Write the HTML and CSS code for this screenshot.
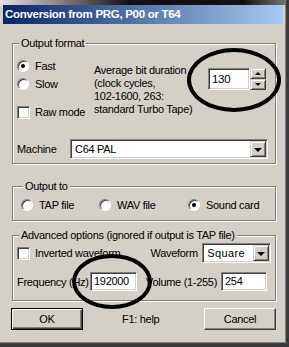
FILE: index.html
```html
<!DOCTYPE html>
<html lang="en">
<head>
    <meta charset="UTF-8">
    <meta name="viewport" content="width=device-width, initial-scale=1.0">
    <title>Conversion from PRG, P00 or T64</title>
    <link rel="stylesheet" href="styles.css">
</head>
<body>
    <div class="window">
        <div class="edge"></div>
        <div class="titlebar">Conversion from PRG, P00 or T64</div>

        <div class="content">
            <!-- output format -->
            <fieldset class="group fmt">
                <legend>Output format</legend>
                <div class="fmt-row">
                    <div class="choices">
                        <div class="opt"><span class="radio on"></span>Fast</div>
                        <div class="opt"><span class="radio"></span>Slow</div>
                        <div class="opt raw"><span class="check"></span>Raw mode</div>
                    </div>
                    <div class="hint">Average bit duration<br>(clock cycles,<br>102-1600, 263:<br>standard Turbo Tape)</div>
                    <div class="spin">
                        <div class="field sunken">130</div>
                        <div class="arrows">
                            <span class="raised"><i class="tri up"></i></span>
                            <span class="raised"><i class="tri down"></i></span>
                        </div>
                    </div>
                </div>
                <div class="machine-row">
                    <span class="machine-lbl">Machine</span>
                    <div class="combo sunken machine">
                        <span class="val">C64 PAL</span>
                        <span class="drop raised"><i class="tri dn"></i></span>
                    </div>
                </div>
            </fieldset>

            <!-- output to -->
            <fieldset class="group out">
                <legend>Output to</legend>
                <div class="out-row">
                    <div class="opt tap"><span class="radio"></span>TAP file</div>
                    <div class="opt wav"><span class="radio"></span>WAV file</div>
                    <div class="opt"><span class="radio on"></span>Sound card</div>
                </div>
            </fieldset>

            <!-- advanced -->
            <fieldset class="group adv">
                <legend>Advanced options (ignored if output is TAP file)</legend>
                <div class="adv-row">
                    <div class="opt inv"><span class="check"></span>Inverted waveform</div>
                    <span class="wave-lbl">Waveform</span>
                    <div class="combo sunken wave">
                        <span class="val square">Square</span>
                        <span class="drop raised"><i class="tri dn"></i></span>
                    </div>
                </div>
                <div class="adv-row second">
                    <span class="freq-lbl">Frequency (Hz)</span>
                    <div class="field sunken freq">192000</div>
                    <span class="vol-lbl">Volume (1-255)</span>
                    <div class="field sunken vol">254</div>
                </div>
            </fieldset>

            <div class="buttons">
                <div class="button default"><span>OK</span></div>
                <span class="help">F1: help</span>
                <div class="button cancel"><span>Cancel</span></div>
            </div>
        </div>

        <!-- marker circles drawn over the dialog -->
        <div class="mark mark-spin"></div>
        <div class="mark mark-freq"></div>
    </div>
</body>
</html>
```

FILE: styles.css
```css
*{
    box-sizing: border-box;
}
body{
    margin: 0;
    width: 289px;
    height: 347px;
    background-color: #3a3a3a;
    font-family: "Liberation Sans", Arial, sans-serif;
    font-size: 11px;
    letter-spacing: -0.3px;
    color: #000;
    white-space: nowrap;
    overflow: hidden;
}
.window{
    position: relative;
    width: 287px;
    height: 344px;
    background-color: #d4d0c8;
    border-right: 1px solid #404040;
    border-bottom: 1px solid #404040;
    box-shadow: inset -1px -1px 0 #808080;
}
.edge{
    height: 5px;
    background: linear-gradient(to right, #e4e2dc 0%, #8a8884 20%, #111 45%, #111 85%, #777 100%);
}
.titlebar{
    margin: 0 3px;
    height: 19px;
    line-height: 19px;
    padding-left: 2px;
    color: #fff;
    font-weight: bold;
    font-size: 11.5px;
    background: linear-gradient(to right, #0a246a, #a6caf0);
}
.content{
    padding: 12px 10px 0 12px;
}

/* group boxes */
.group{
    margin: 0;
    min-width: 0;
    border: 1px solid #808080;
    box-shadow: inset 1px 1px 0 #fff, 1px 1px 0 #fff;
    padding: 0 4px;
}
.group legend{
    margin-left: 2px;
    padding: 0 2px;
    line-height: 14px;
    background-color: #d4d0c8;
}
.opt{
    display: flex;
    align-items: center;
    height: 18px;
}
.radio{
    position: relative;
    width: 12px;
    height: 12px;
    margin-right: 6px;
    border-radius: 50%;
    border: 1px solid;
    border-color: #808080 #fff #fff #808080;
    box-shadow: inset 1px 1px 0 #404040;
    background-color: #fff;
}
.radio.on::after{
    content: "";
    position: absolute;
    left: 3px;
    top: 3px;
    width: 4px;
    height: 4px;
    border-radius: 50%;
    background-color: #000;
}
.check{
    width: 13px;
    height: 13px;
    margin-right: 5px;
    border: 1px solid;
    border-color: #808080 #fff #fff #808080;
    box-shadow: inset 1px 1px 0 #404040, inset -1px -1px 0 #d4d0c8;
    background-color: #fff;
}
.sunken{
    border: 1px solid;
    border-color: #808080 #fff #fff #808080;
    box-shadow: inset 1px 1px 0 #404040, inset -1px -1px 0 #d4d0c8;
    background-color: #fff;
}
.raised{
    display: flex;
    align-items: center;
    justify-content: center;
    border: 1px solid;
    border-color: #d4d0c8 #404040 #404040 #d4d0c8;
    box-shadow: inset 1px 1px 0 #fff, inset -1px -1px 0 #808080;
    background-color: #d4d0c8;
}
.tri{
    width: 0;
    height: 0;
    border-left: 3px solid transparent;
    border-right: 3px solid transparent;
}
.tri.up{
    border-bottom: 3px solid #000;
}
.tri.down{
    border-top: 3px solid #000;
}
.tri.dn{
    border-left-width: 4px;
    border-right-width: 4px;
    border-top: 4px solid #000;
    margin-top: 1px;
}

/* output format */
.fmt{
    padding-top: 7px;
    padding-bottom: 4px;
    padding-right: 7px;
}
.fmt-row{
    display: flex;
    align-items: flex-start;
}
.choices{
    width: 77px;
}
.raw{
    margin-top: 10px;
}
.hint{
    width: 114px;
    margin-top: 7px;
    line-height: 13px;
}
.spin{
    display: flex;
    margin-top: 11px;
    height: 22px;
}
.spin .field{
    width: 42px;
    height: 22px;
    padding-left: 3px;
    line-height: 20px;
    font-size: 11.5px;
}
.arrows{
    display: flex;
    flex-direction: column;
    width: 16px;
}
.arrows .raised{
    height: 11px;
}
.machine-row{
    display: flex;
    align-items: center;
    margin-top: 18px;
}
.machine-lbl{
    width: 53px;
}
.combo{
    display: flex;
    align-items: center;
    height: 20px;
    padding: 1px;
}
.combo .val{
    flex: 1;
    padding-left: 3px;
}
.combo .drop{
    width: 16px;
    height: 16px;
}
.machine{
    flex: 1;
}

/* output to */
.out{
    margin-top: 15px;
    padding: 5px 4px 8px 8px;
}
.out-row{
    display: flex;
}
.out-row .opt{
    height: 14px;
}
.tap{
    width: 78px;
}
.wav{
    width: 89px;
}

/* advanced */
.adv{
    margin-top: 7px;
    padding-top: 1px;
    padding-bottom: 9px;
}
.adv-row{
    display: flex;
    align-items: center;
    height: 20px;
}
.inv{
    width: 134px;
}
.wave-lbl{
    width: 52px;
}
.wave{
    width: 69px;
}
.square{
    letter-spacing: 0.4px;
}
.adv-row.second{
    margin-top: 9px;
    height: 19px;
}
.freq-lbl{
    width: 73px;
}
.field{
    height: 19px;
    line-height: 17px;
    padding-left: 3px;
}
.freq{
    width: 47px;
}
.vol-lbl{
    margin-left: 9px;
}
.vol{
    width: 46px;
    margin-left: auto;
    margin-right: 4px;
}

/* buttons */
.buttons{
    display: flex;
    align-items: center;
    margin-top: 7px;
    margin-left: -1px;
}
.button{
    width: 72px;
    height: 22px;
    display: flex;
    align-items: center;
    justify-content: center;
    border: 1px solid;
    border-color: #fff #404040 #404040 #fff;
    box-shadow: inset -1px -1px 0 #808080;
    background-color: #d4d0c8;
}
.button.default{
    border: 1px solid #000;
    box-shadow: inset 1px 1px 0 #fff, inset -1px -1px 0 #404040, inset -2px -2px 0 #808080;
}
.help{
    margin-left: 39px;
}
.cancel{
    margin-left: auto;
}

/* black marker circles */
.mark{
    position: absolute;
    border: 4px solid #000;
    border-radius: 50%;
}
.mark-spin{
    left: 187px;
    top: 48px;
    width: 94px;
    height: 64px;
}
.mark-freq{
    left: 72px;
    top: 254px;
    width: 80px;
    height: 55px;
}
```
